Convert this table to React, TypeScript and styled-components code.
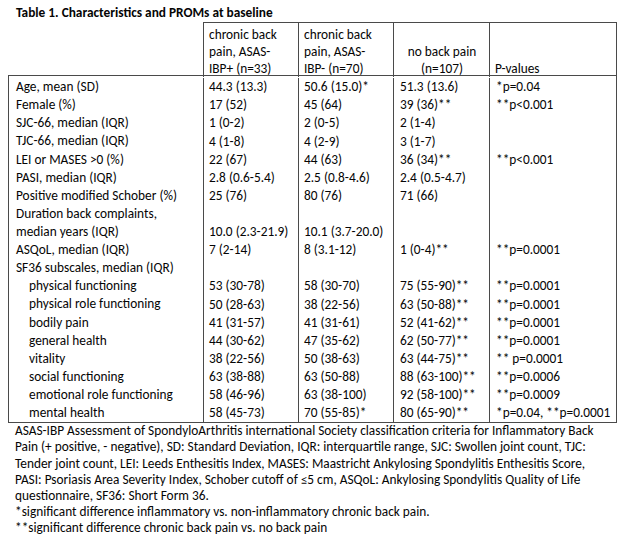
import React from "react";
import styled, { createGlobalStyle } from "styled-components";

const Global = createGlobalStyle`
  html, body { margin: 0; padding: 0; background: #ffffff; }
  body { font-family: Carlito, Calibri, Lato, sans-serif; color: #050505; }
`;

const Page = styled.div`
  width: 624px;
  height: 536px;
  box-sizing: border-box;
  padding: 4px 0 0 8px;
  font-size: 13.33px;
  overflow: hidden;
`;

const Title = styled.div`
  font-weight: 700;
  line-height: 18px;
  height: 18px;
  padding-left: 8px;
  white-space: nowrap;
`;

const COLS = "195px 95px 95px 96px 128px";
const BODY_COLS = "194px 95px 95px 96px 127px";

const HeadRow = styled.div`
  display: grid;
  grid-template-columns: ${COLS};
  width: 609px;
  height: 53px;
`;

const HeadCell = styled.div<{ $blank?: boolean; $last?: boolean; $align?: "start" | "center"; $top?: boolean }>`
  box-sizing: border-box;
  display: flex;
  flex-direction: column;
  justify-content: ${(p) => (p.$top ? "flex-start" : "flex-end")};
  text-align: ${(p) => (p.$align === "center" ? "center" : "left")};
  padding: 4px 4px 0 5px;
  line-height: 16.8px;
  border-top: ${(p) => (p.$blank ? "none" : "1px solid #4a4a4a")};
  border-left: ${(p) => (p.$blank ? "none" : "1px solid #4a4a4a")};
  border-right: ${(p) => (p.$last ? "1px solid #4a4a4a" : "none")};
  white-space: nowrap;
`;

const Body = styled.div`
  width: 609px;
  box-sizing: border-box;
  border: 1px solid #4a4a4a;
  padding-top: 2px;
`;

const Row = styled.div`
  display: grid;
  grid-template-columns: ${BODY_COLS};
  line-height: 18px;
  min-height: 18.15px;
`;

const Label = styled.div<{ $indent?: boolean }>`
  padding-left: ${(p) => (p.$indent ? "20px" : "7px")};
  white-space: nowrap;
`;

const Value = styled.div<{ $pad?: number }>`
  border-left: 1px solid #4a4a4a;
  padding-left: ${(p) => p.$pad ?? 5}px;
  display: flex;
  flex-direction: column;
  justify-content: flex-end;
  white-space: nowrap;
`;

const Notes = styled.div`
  line-height: 16.1px;
  padding-left: 7px;
`;

const NoteLine = styled.div`
  white-space: nowrap;
`;

type RowData = {
  label: React.ReactNode;
  indent?: boolean;
  v: [string, string, string, string];
};

const rows: RowData[] = [
  { label: "Age, mean (SD)", v: ["44.3 (13.3)", "50.6 (15.0)*", "51.3 (13.6)", "*p=0.04"] },
  { label: "Female (%)", v: ["17 (52)", "45 (64)", "39 (36)**", "**p<0.001"] },
  { label: "SJC-66, median (IQR)", v: ["1 (0-2)", "2 (0-5)", "2 (1-4)", ""] },
  { label: "TJC-66, median (IQR)", v: ["4 (1-8)", "4 (2-9)", "3 (1-7)", ""] },
  { label: "LEI or MASES >0 (%)", v: ["22 (67)", "44 (63)", "36 (34)**", "**p<0.001"] },
  { label: "PASI, median (IQR)", v: ["2.8 (0.6-5.4)", "2.5 (0.8-4.6)", "2.4 (0.5-4.7)", ""] },
  { label: "Positive modified Schober (%)", v: ["25 (76)", "80 (76)", "71 (66)", ""] },
  {
    label: (
      <>
        Duration back complaints,
        <br />
        median years (IQR)
      </>
    ),
    v: ["10.0 (2.3-21.9)", "10.1 (3.7-20.0)", "", ""],
  },
  { label: "ASQoL, median (IQR)", v: ["7 (2-14)", "8 (3.1-12)", "1 (0-4)**", "**p=0.0001"] },
  { label: "SF36 subscales, median (IQR)", v: ["", "", "", ""] },
  { label: "physical functioning", indent: true, v: ["53 (30-78)", "58 (30-70)", "75 (55-90)**", "**p=0.0001"] },
  { label: "physical role functioning", indent: true, v: ["50 (28-63)", "38 (22-56)", "63 (50-88)**", "**p=0.0001"] },
  { label: "bodily pain", indent: true, v: ["41 (31-57)", "41 (31-61)", "52 (41-62)**", "**p=0.0001"] },
  { label: "general health", indent: true, v: ["44 (30-62)", "47 (35-62)", "62 (50-77)**", "**p=0.0001"] },
  { label: "vitality", indent: true, v: ["38 (22-56)", "50 (38-63)", "63 (44-75)**", "** p=0.0001"] },
  { label: "social functioning", indent: true, v: ["63 (38-88)", "63 (50-88)", "88 (63-100)**", "**p=0.0006"] },
  { label: "emotional role functioning", indent: true, v: ["58 (46-96)", "63 (38-100)", "92 (58-100)**", "**p=0.0009"] },
  { label: "mental health", indent: true, v: ["58 (45-73)", "70 (55-85)*", "80 (65-90)**", "*p=0.04, **p=0.0001"] },
];

const notes = [
  "ASAS-IBP Assessment of SpondyloArthritis international Society classification criteria for Inflammatory Back",
  "Pain (+ positive, - negative), SD: Standard Deviation, IQR: interquartile range, SJC: Swollen joint count, TJC:",
  "Tender joint count, LEI: Leeds Enthesitis Index, MASES: Maastricht Ankylosing Spondylitis Enthesitis Score,",
  "PASI: Psoriasis Area Severity Index, Schober cutoff of \u22645 cm, ASQoL: Ankylosing Spondylitis Quality of Life",
  "questionnaire, SF36: Short Form 36.",
  "*significant difference inflammatory vs. non-inflammatory chronic back pain.",
  "**significant difference chronic back pain vs. no back pain",
];

export default function App() {
  return (
    <>
      <Global />
      <Page>
        <Title>Table 1. Characteristics and PROMs at baseline</Title>
        <HeadRow>
          <HeadCell $blank />
          <HeadCell $top>
            <span>chronic back</span>
            <span>pain, ASAS-</span>
            <span>IBP+ (n=33)</span>
          </HeadCell>
          <HeadCell $top>
            <span>chronic back</span>
            <span>pain, ASAS-</span>
            <span>IBP- (n=70)</span>
          </HeadCell>
          <HeadCell $align="center">
            <span>no back pain</span>
            <span>(n=107)</span>
          </HeadCell>
          <HeadCell $last>
            <span>P-values</span>
          </HeadCell>
        </HeadRow>
        <Body>
          {rows.map((r, i) => (
            <Row key={i}>
              <Label $indent={r.indent}>{r.label}</Label>
              <Value>{r.v[0]}</Value>
              <Value>{r.v[1]}</Value>
              <Value $pad={6}>{r.v[2]}</Value>
              <Value $pad={6}>{r.v[3]}</Value>
            </Row>
          ))}
        </Body>
        <Notes>
          {notes.map((n, i) => (
            <NoteLine key={i}>{n}</NoteLine>
          ))}
        </Notes>
      </Page>
    </>
  );
}
